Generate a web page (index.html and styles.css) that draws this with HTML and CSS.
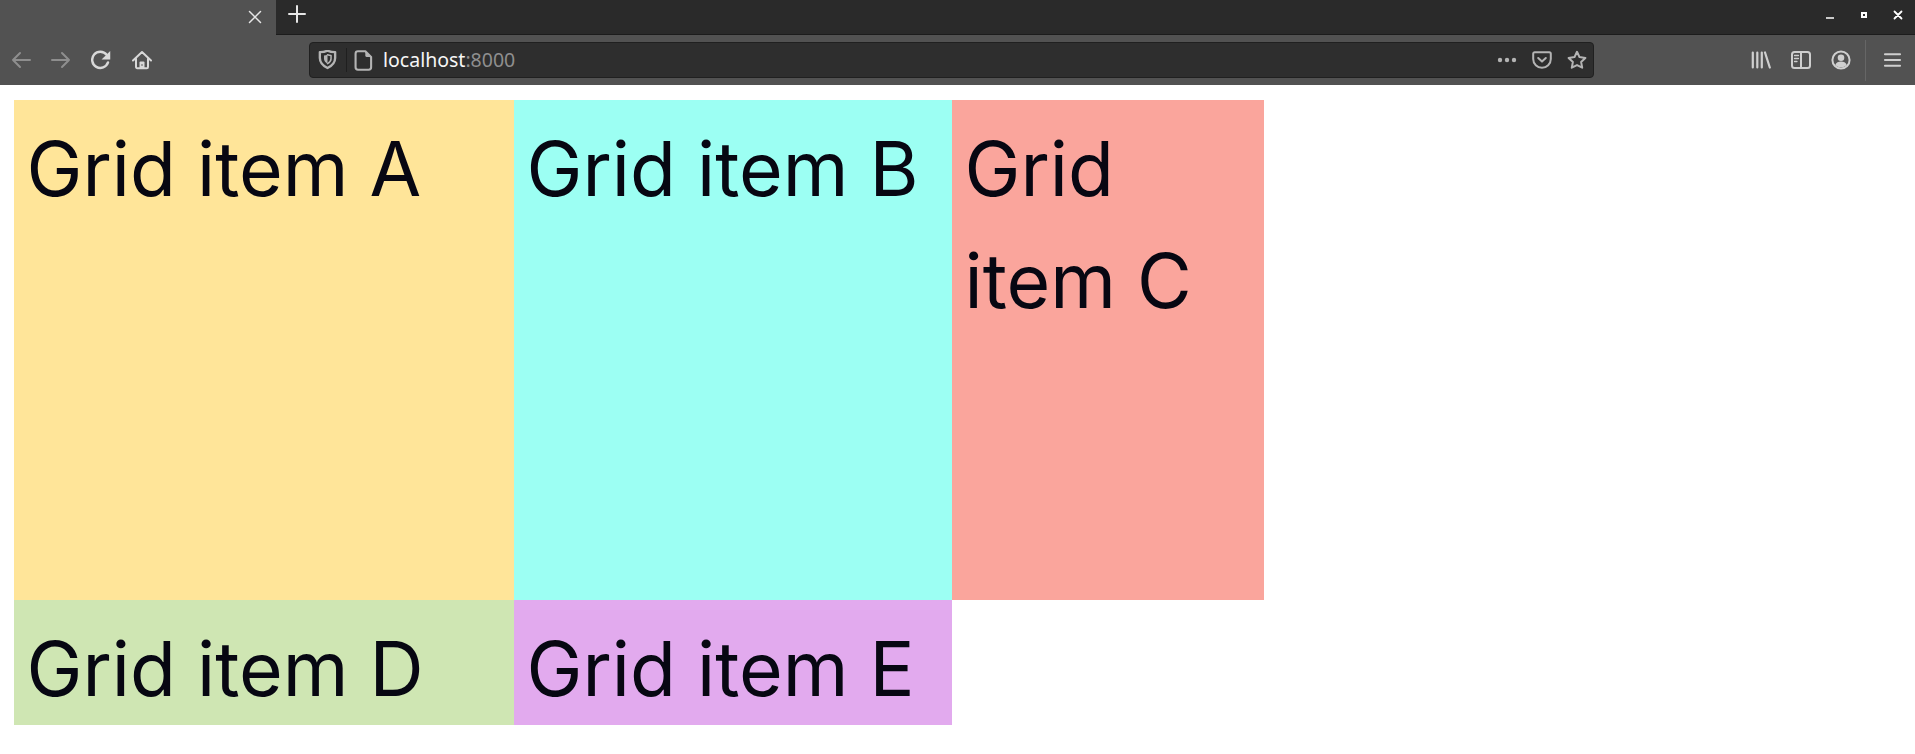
FILE: index.html
```html
<!DOCTYPE html>
<html lang="en">
<head>
<meta charset="utf-8">
<title>localhost:8000</title>
<link rel="stylesheet" href="styles.css">
</head>
<body>
<header class="browser">
  <div class="tabbar">
    <div class="tab">
      <svg class="tab-close" viewBox="0 0 14 14"><path d="M1.500 1.500l11 11M12.500 1.500l-11 11"/></svg>
    </div>
    <svg class="new-tab" viewBox="0 0 18 18"><path d="M9 1v16M1 9h16"/></svg>
    <div class="window-controls">
      <svg class="wc" viewBox="0 0 10 10"><path class="wc-min" d="M1 8h8"/></svg>
      <svg class="wc" viewBox="0 0 10 10"><path class="wc-max" d="M3 3h4v4H3z"/></svg>
      <svg class="wc" viewBox="0 0 10 10"><path class="wc-close" d="M1.500 1.500l7 7M8.500 1.500l-7 7"/></svg>
    </div>
  </div>
  <div class="toolbar">
    <nav class="nav-group">
      <svg class="ico dim" viewBox="0 0 20 20"><path d="M19 10H2M9 3l-7 7 7 7"/></svg>
      <svg class="ico dim" viewBox="0 0 20 20"><path d="M1 10h17M11 3l7 7-7 7"/></svg>
      <svg class="ico thick" viewBox="1.500 1 18 18"><path d="M16.800 12.200A7.300 7.300 0 1 1 15.600 5.300L17.500 7.500"/><path class="fill" d="M18.800 1.800v7.800h-7.800z"/></svg>
      <svg class="ico home" viewBox="0 0 20 20"><path d="M1 10.500L10 2l9 8.500M4 8.500V17a1.200 1.200 0 0 0 1.200 1.200h9.600A1.200 1.200 0 0 0 16 17V8.500"/><path class="fill" d="M7.500 18v-5.500a1 1 0 0 1 1-1h3a1 1 0 0 1 1 1V18z"/><circle class="door" cx="10" cy="15" r="0.800"/></svg>
    </nav>
    <div class="urlbar">
      <svg class="ico-sm shield" viewBox="1 1 16 17"><path d="M9 1.500c2 1 4.500 1.300 6.500 1.300v5c0 4.200-3 6.800-6.500 8.500-3.500-1.700-6.500-4.300-6.500-8.500v-5C4.500 2.800 7 2.500 9 1.500z"/><path class="fill" d="M9 5c-1 .4-2 .6-3 .6v2.800c0 2 1.400 3.300 3 4.200z"/><path class="thin" d="M9 5c1 .4 2 .6 3 .6v2.800c0 2-1.400 3.300-3 4.200"/></svg>
      <span class="url-sep"></span>
      <svg class="ico-sm page" viewBox="0 0 17.500 20"><path d="M3.500 1.200h7l5.500 5.500V16.500a2.300 2.300 0 0 1-2.300 2.300H3.500a2.300 2.300 0 0 1-2.300-2.300V3.500a2.300 2.300 0 0 1 2.300-2.300z"/><path class="fill" d="M10.500 1.200l5.500 5.500h-4a1.500 1.500 0 0 1-1.500-1.500z"/></svg>
      <div class="url-text">localhost<span class="port">:8000</span></div>
      <div class="url-actions">
        <svg class="dots" viewBox="0 0 20 6"><circle cx="3" cy="3" r="2.200"/><circle cx="10" cy="3" r="2.200"/><circle cx="17" cy="3" r="2.200"/></svg>
        <svg class="ico pale" viewBox="0 0 20 18"><path d="M2.700 1.200h14.600A1.500 1.500 0 0 1 18.800 2.700V8c0 5-4 8.800-8.800 8.800S1.200 13 1.200 8V2.700A1.500 1.500 0 0 1 2.700 1.200z"/><path d="M6.200 7l3.800 3.600L13.800 7"/></svg>
        <svg class="ico pale" viewBox="0 0 20 20"><path d="M10 1.800l2.500 5.300 5.900.8-4.300 4 1.100 5.800L10 15.100 4.800 17.700l1.100-5.800-4.300-4 5.900-.8z"/></svg>
      </div>
    </div>
    <div class="tool-group">
      <svg class="ico thick" viewBox="0 0 20 20"><path d="M1.800 2.500v15M6.300 2.500v15M10.800 2.500v15M14 2.500l4.800 15"/></svg>
      <svg class="ico" viewBox="0 0 20 18"><rect x="1" y="1" width="18" height="16" rx="2.500"/><path d="M10 1v16"/><path class="thin" d="M3.500 4.500h4M3.500 7.500h4M3.500 10.500h2.500"/></svg>
      <svg class="ico" viewBox="0 0 20 20"><circle cx="10" cy="10" r="8.600"/><circle class="fill" cx="10" cy="7.800" r="3.300"/><path class="fill" d="M4.300 15c1-2.500 3-3.400 5.700-3.400s4.700.9 5.700 3.400c-1.500 1.500-3.500 2.300-5.700 2.300S5.800 16.500 4.300 15z"/></svg>
      <span class="tool-sep"></span>
      <svg class="ico burger" viewBox="0 0 20 20"><path d="M2 4h16M2 10h16M2 16h16"/></svg>
    </div>
  </div>
</header>
<main class="grid">
  <div class="cell cell-a">Grid item A</div>
  <div class="cell cell-b">Grid item B</div>
  <div class="cell cell-c">Grid item C</div>
  <div class="cell cell-d">Grid item D</div>
  <div class="cell cell-e">Grid item E</div>
</main>
</body>
</html>
```
FILE: styles.css
```css
* { box-sizing: border-box; }
html, body { margin: 0; padding: 0; background: #fff; }
body { height: 754px; overflow: hidden; }

svg { display: block; flex: none; fill: none; }
svg path, svg circle, svg rect { stroke: currentColor; stroke-width: 2; stroke-linecap: round; stroke-linejoin: round; }
svg .fill { fill: currentColor; stroke: none; }
svg .thin { stroke-width: 1.300; }
svg .door { fill: #525252; stroke: none; }
.thick path { stroke-width: 2.200; }

.browser { display: flex; flex-direction: column; height: 85px; background: #525252; }

.tabbar { display: flex; align-items: center; height: 35px; background: #2a2a2a; border-bottom: 1px solid #1c1c1c; }
.tab { display: flex; align-items: center; justify-content: flex-end; width: 276px; height: 35px; padding-right: 14px; background: #525252; }
.tab-close { width: 14px; height: 14px; color: #e6e6e6; }
.tab-close path { stroke-width: 1.500; }
.new-tab { width: 18px; height: 18px; margin-left: 12px; margin-bottom: 6px; color: #e6e6e6; }
.window-controls { display: flex; gap: 24px; margin-left: auto; margin-right: 12px; margin-bottom: 4px; }
.wc { width: 10px; height: 10px; color: #fff; }
.wc-min { stroke-width: 1.500; stroke-linecap: butt; }
.wc-max { stroke-width: 2; stroke-linejoin: miter; }
.wc-close { stroke-width: 1.800; }

.toolbar { display: flex; align-items: center; height: 50px; }
.nav-group { display: flex; align-items: center; gap: 20px; padding-left: 11px; width: 309px; flex: none; }
.ico { width: 20px; height: 20px; color: #d8d8d8; }
.ico.dim { color: #8e8e8e; }
.ico.pale { color: #b4b4b4; }
.home { margin-left: 1px; }

.urlbar { display: flex; align-items: center; width: 1285px; height: 36px; flex: none; background: #2e2e2e; border: 1px solid #202020; border-radius: 4px; padding: 0 6px 0 8px; }
.ico-sm { color: #b4b4b4; flex: none; }
.shield { width: 19px; height: 20px; }
.url-sep { width: 1px; height: 24px; background: #1f1f1f; margin: 0 7px 0 9px; }
.page { width: 19px; height: 21px; }
.url-text { margin-left: 10px; font: 19.500px/24px "Noto Sans", sans-serif; color: #f6f6f6; }
.port { color: #8f8f8f; }
.url-actions { display: flex; align-items: center; gap: 15px; margin-left: auto; }
.dots { width: 20px; height: 6px; color: #b4b4b4; }
.dots circle { fill: currentColor; stroke: none; }

.tool-group { display: flex; align-items: center; gap: 20px; margin-left: auto; padding-right: 13px; }
.tool-group .ico { color: #cfcfcf; }
.tool-group .burger { width: 19px; }
.tool-sep { width: 1px; height: 41px; background: #666; margin: 0 -3px 0 -6px; }

.grid { display: grid; grid-template-columns: 500px 438px 312px; grid-template-rows: 500px 125px; margin: 15px 0 0 14px; }
.cell { padding: 12.500px; font: 75px/112.500px Inter, sans-serif; color: #070712; }
.cell-a { background: #ffe599; }
.cell-b { background: #9cfff3; }
.cell-c { background: #faa59c; }
.cell-d { background: #cfe6b3; }
.cell-e { background: #e2aaee; }
```
